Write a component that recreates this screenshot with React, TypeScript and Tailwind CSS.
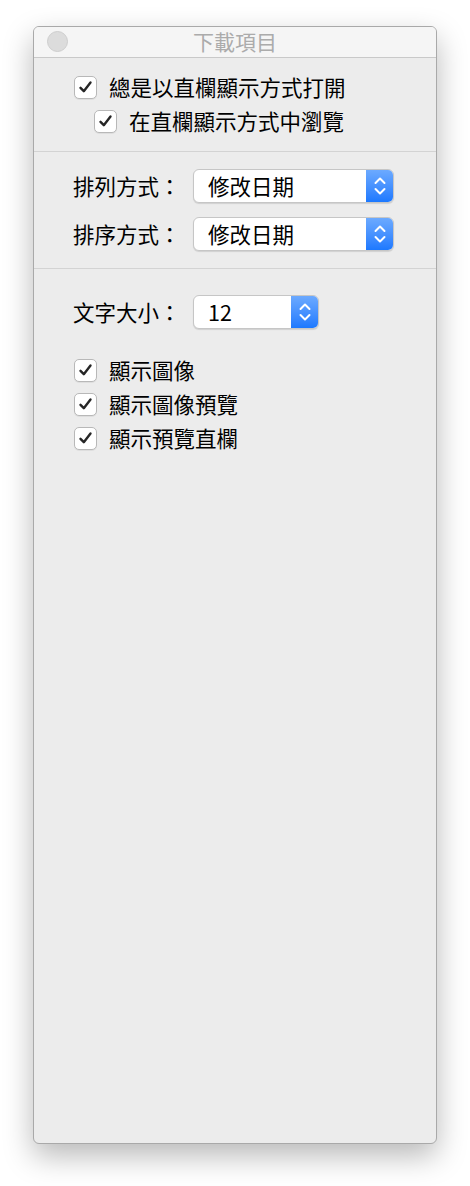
import React from "react";

const font = { fontFamily: '"Noto Sans CJK TC", "Noto Sans", sans-serif' };

function Check() {
  return (
    <div className="w-[23px] h-[23px] shrink-0 rounded-[5px] border border-[#b8b8b8] bg-white shadow-[0_1px_0_rgba(0,0,0,0.06)] flex items-center justify-center">
      <svg width="15" height="14" viewBox="0 0 15 14" fill="none">
        <path d="M2.5 7.8 L5.8 11.2 L12.5 2.5" stroke="#262626" strokeWidth="2.4" strokeLinecap="round" strokeLinejoin="round" />
      </svg>
    </div>
  );
}

function CheckRow({ label, indent = false }: { label: string; indent?: boolean }) {
  return (
    <div className={`h-[34px] flex items-center gap-[12px] ${indent ? "pl-[60px]" : "pl-[40px]"}`}>
      <Check />
      <span className="text-[21.5px] leading-none text-black">{label}</span>
    </div>
  );
}

function Popup({ value, width }: { value: string; width: string }) {
  return (
    <div className={`${width} h-[34px] flex rounded-[6px] border border-[#c6c6c6] bg-white shadow-[0_1px_1px_rgba(0,0,0,0.12)] overflow-hidden`}>
      <div className="flex-1 flex items-center pl-[14px] text-[21.5px] leading-none text-black">{value}</div>
      <div className="w-[28px] -my-px -mr-px flex items-center justify-center bg-gradient-to-b from-[#6eabff] to-[#1877ff] rounded-r-[6px]">
        <svg width="14" height="22" viewBox="0 0 14 22" fill="none">
          <path d="M2.5 8 L7 3.5 L11.5 8" stroke="white" strokeWidth="2" strokeLinecap="round" strokeLinejoin="round" />
          <path d="M2.5 14 L7 18.5 L11.5 14" stroke="white" strokeWidth="2" strokeLinecap="round" strokeLinejoin="round" />
        </svg>
      </div>
    </div>
  );
}

function LabeledPopup({ label, value, width }: { label: string; value: string; width: string }) {
  return (
    <div className="flex items-center pl-[39px]">
      <div className="w-[120px] text-[21.5px] leading-none text-black">{label}</div>
      <Popup value={value} width={width} />
    </div>
  );
}

export default function App() {
  return (
    <div className="w-[470px] h-[1186px] bg-white pt-[26px] pl-[33px]" style={font}>
      <div className="w-[404px] h-[1118px] rounded-[6px] border border-[#a9a9a9] bg-[#ececec] shadow-[0_12px_30px_rgba(0,0,0,0.28)] overflow-hidden flex flex-col">
        <div className="h-[31px] shrink-0 bg-[#f5f5f5] border-b border-[#c9c9c9] flex items-center relative">
          <div className="absolute left-[13px] top-[4px] w-[21px] h-[21px] rounded-full bg-[#dcdcdc] border border-[#cdcdcd]" />
          <div className="flex-1 text-center text-[21px] leading-none text-[#ababab] -mt-[2px]">下載項目</div>
        </div>

        <div className="pt-[12px] pb-[13px] flex flex-col">
          <CheckRow label="總是以直欄顯示方式打開" />
          <CheckRow label="在直欄顯示方式中瀏覽" indent />
        </div>
        <div className="h-px bg-[#d3d3d3]" />

        <div className="pt-[17px] pb-[17px] flex flex-col gap-[14px]">
          <LabeledPopup label="排列方式：" value="修改日期" width="w-[201px]" />
          <LabeledPopup label="排序方式：" value="修改日期" width="w-[201px]" />
        </div>
        <div className="h-px bg-[#d3d3d3]" />

        <div className="pt-[26px] flex flex-col">
          <LabeledPopup label="文字大小：" value="12" width="w-[126px]" />
          <div className="mt-[24px] flex flex-col">
            <CheckRow label="顯示圖像" />
            <CheckRow label="顯示圖像預覽" />
            <CheckRow label="顯示預覽直欄" />
          </div>
        </div>
      </div>
    </div>
  );
}
